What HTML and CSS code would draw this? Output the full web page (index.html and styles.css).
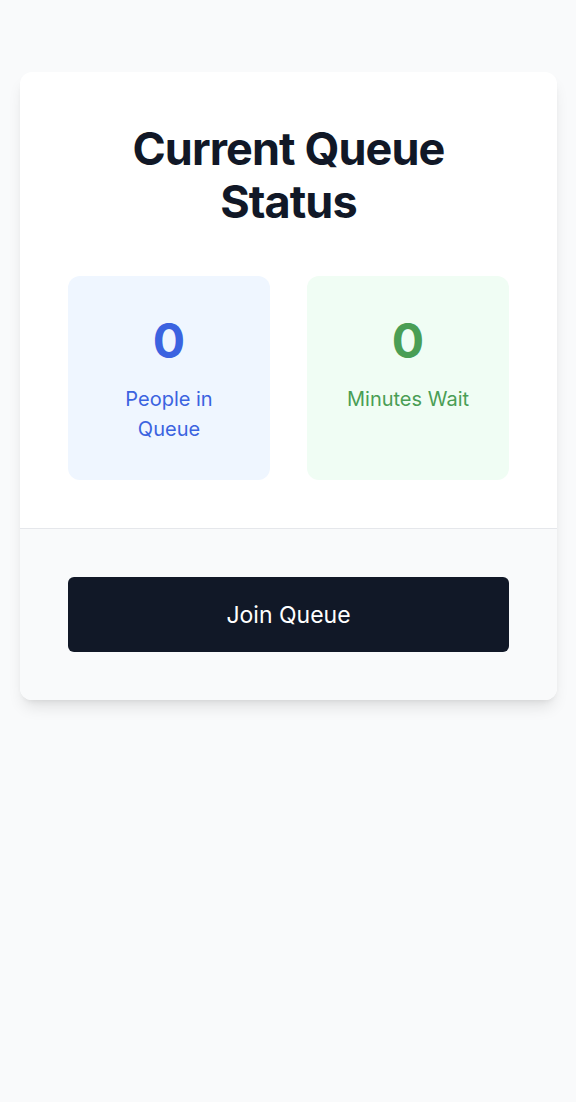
FILE: index.html
```html
<!DOCTYPE html>
<html lang="en">
<head>
<meta charset="utf-8">
<title>Queue Status</title>
<link rel="stylesheet" href="styles.css">
</head>
<body>
<main class="page">
  <section class="card">
    <div class="card-body">
      <h1 class="title">Current Queue Status</h1>
      <div class="stats">
        <div class="stat stat-blue">
          <div class="stat-value">0</div>
          <div class="stat-label">People in Queue</div>
        </div>
        <div class="stat stat-green">
          <div class="stat-value">0</div>
          <div class="stat-label">Minutes Wait</div>
        </div>
      </div>
    </div>
    <div class="card-footer">
      <button class="join-btn" type="button">Join Queue</button>
    </div>
  </section>
</main>
</body>
</html>
```

FILE: styles.css
```css
* { box-sizing: border-box; }
html, body {
  margin: 0;
  padding: 0;
  background: #f9fafb;
  font-family: Inter, "Noto Sans", sans-serif;
}
.page {
  padding: 72px 19px 72px 20px;
}
.card {
  background: #ffffff;
  border-radius: 12px;
  box-shadow: 0 10px 15px -3px rgba(0,0,0,0.1), 0 4px 6px -4px rgba(0,0,0,0.1);
  overflow: hidden;
}
.card-body {
  padding: 48px;
}
.title {
  margin: 2px 0 48px;
  text-align: center;
  font-size: 45px;
  line-height: 53px;
  letter-spacing: -0.02em;
  font-weight: 700;
  color: #111827;
}
.stats {
  display: grid;
  grid-template-columns: 1fr 1fr;
  gap: 37px;
}
.stat {
  border-radius: 12px;
  padding: 41px 24px 0;
  height: 204px;
  text-align: center;
}
.stat-blue { background: #eff6ff; color: #3b63e0; }
.stat-green { background: #f0fdf4; color: #4a9e55; }
.stat-value {
  font-size: 48px;
  line-height: 48px;
  font-weight: 700;
}
.stat-label {
  margin-top: 19px;
  font-size: 20px;
  line-height: 30px;
}
.card-footer {
  background: #f9fafb;
  border-top: 1px solid #e5e7eb;
  padding: 48px;
}
.join-btn {
  display: block;
  width: 100%;
  height: 75px;
  border: 0;
  border-radius: 6px;
  background: #111827;
  color: #ffffff;
  font-family: Inter, "Noto Sans", sans-serif;
  font-size: 23px;
  font-weight: 400;
}
```
